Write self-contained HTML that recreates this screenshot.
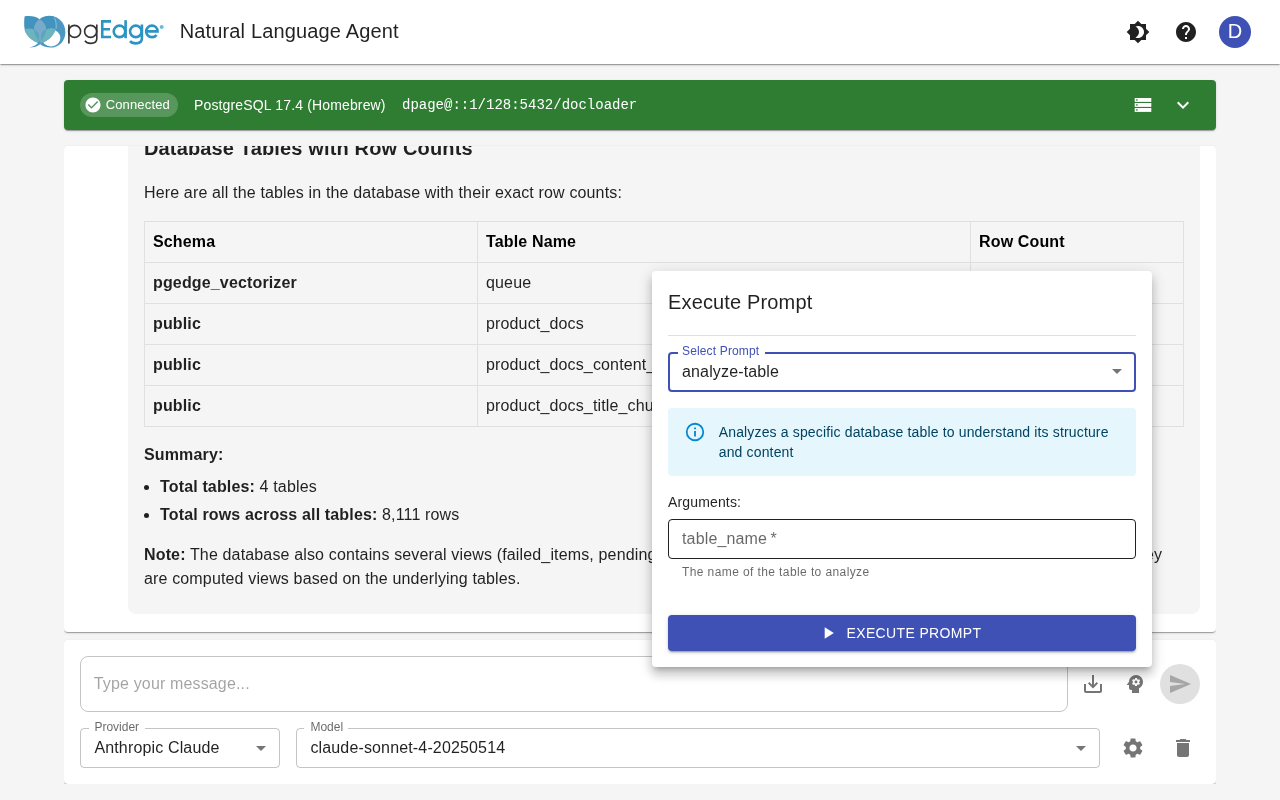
<!DOCTYPE html>
<html><head><meta charset="utf-8">
<style>
*{box-sizing:border-box;margin:0;padding:0}
html,body{width:1280px;height:800px;overflow:hidden}
body>*{will-change:transform}
body{background:#f5f5f5;font-family:"Liberation Sans",sans-serif;color:rgba(0,0,0,0.87);position:relative}
.abs{position:absolute}
.sh1{box-shadow:0px 2px 1px -1px rgba(0,0,0,0.2),0px 1px 1px 0px rgba(0,0,0,0.14),0px 1px 3px 0px rgba(0,0,0,0.12)}
#hdr{left:0;top:0;width:1280px;height:64px;background:#fff}
#title{left:179.7px;top:17px;font-size:20px;letter-spacing:0.15px;line-height:28px;white-space:nowrap}
#banner{left:64px;top:80px;width:1152px;height:50px;background:#2e7d32;border-radius:4px}
#chip{left:16px;top:13px;width:98px;height:24px;border-radius:12px;background:rgba(255,255,255,0.2)}
#chat{left:0;top:8px;width:1152px;height:486px;background:#fff;border-radius:4px;overflow:hidden}
#bubble{left:64px;top:-40px;width:1072px;height:508px;background:#f5f5f5;border-radius:8px}
#input{left:0;top:502px;width:1152px;height:144px;background:#fff;border-radius:4px}
#dlg{left:652px;top:271px;width:500px;height:396px;background:#fff;border-radius:4px;box-shadow:0px 5px 5px -3px rgba(0,0,0,0.2),0px 8px 10px 1px rgba(0,0,0,0.14),0px 3px 14px 2px rgba(0,0,0,0.12)}
.md{font-size:16px;line-height:24px;letter-spacing:0.15px;color:rgba(0,0,0,0.87)}
.md .h3{font-size:20px;font-weight:700;line-height:28px;letter-spacing:0.15px}
.md p{white-space:nowrap}
.md table{border-collapse:collapse;table-layout:fixed;width:1039px}
.md th,.md td{border:1px solid #e0e0e0;padding:8px;text-align:left;line-height:24px;height:41px;white-space:nowrap;overflow:hidden}
.md th{font-weight:700;color:#000}
.md ul{list-style:disc;padding-left:16px}
.md li{margin-bottom:4px}
</style></head><body>
<div id="hdr" class="abs sh1">
  <svg class="abs" style="left:0;top:0" width="180" height="64" viewBox="0 0 180 64">
    <path d="M40 19 C44 15.8 48 15.6 51 15.9 C59.5 16.5 65.5 23.5 65.4 32.4 C65.3 41.2 58.5 47.6 50.5 47.6 C46.5 47.6 43 46.5 40.3 44.3 Z" fill="#4b99c3"/>
    <ellipse cx="51.1" cy="37.9" rx="9.3" ry="8.5" fill="#fff"/>
    <path d="M24.7 16.2 C31 15.3 36 16.3 39.6 19.2 C43 25 43 36 40 43.5 C32 41 25.5 36 24.3 27 C24 22 24.2 18.5 24.7 16.2Z" fill="#4294bf"/>
    <path d="M39.6 19.2 C43 16.5 48 15.6 52 16 C54.2 16.3 55.5 17.5 55.9 20 C56.3 23 56.2 26.5 55.6 29.2 C53.5 36.5 47 41.5 40 43.5 C36.5 36 36.5 25 39.6 19.2Z" fill="#4294bf"/>
    <path d="M54.4 17.6 C55.9 20 56.4 24 56.1 28.6" stroke="#d6e8f2" stroke-width="0.5" fill="none"/>
    <path d="M24.3 29.3 C27.5 28.2 31 28.2 34 29.8 C37.5 32 39.5 37 40 43.5 C33 41.5 26.5 37 24.3 29.3Z" fill="#6db4bd"/>
    <path d="M55.6 28.8 C52.5 27.7 48.5 27.9 45.6 29.8 C42.3 32 40.5 37 40 43.5 C47 41.5 53.5 36.5 55.6 28.8Z" fill="#6db4bd"/>
    <path d="M39.6 19.2 C44 22 46.3 26 46 30 C45.6 35 42 39.5 40 43.5 C38 39.5 34.4 35 34 30 C33.7 26 35.5 22 39.6 19.2Z" fill="#5ba4be"/>
    <path d="M39.6 19.2 C44 22 46.3 26 46 29.6 C43.6 30.3 41.9 32.2 41.2 34.8 L40.9 42.2 L39.2 42.2 L38.9 34.8 C38.2 32.2 36.5 30.3 34 29.6 C33.7 26 35.5 22 39.6 19.2Z" fill="#78aac9"/>
    <path d="M39.6 41 C40.3 41.5 40.5 42.5 40.6 44 C37.5 46.5 34 47.4 29.5 47.4 C34 46.5 37.5 44.5 39.6 41Z" fill="#4b99c3"/>
    <g fill="none" stroke="#333" stroke-width="1.6">
      <circle cx="74.6" cy="31.4" r="6.0"/>
      <path d="M68.9 24.6 V43.4"/>
      <circle cx="90.6" cy="31.4" r="6.0"/>
      <path d="M96.8 24.6 V38.5 C96.8 41.8 94.2 43.4 90.8 43.4 C88.3 43.4 86 42.4 84.9 40.8"/>
    </g>
    <g fill="none" stroke="#2a94c3" stroke-width="2.6">
      <path d="M111 21.35 H102.25 V37.05 H111 M102.25 29.2 H110"/>
      <circle cx="119.5" cy="31.4" r="5.75"/>
      <path d="M125.6 20.2 V38.2"/>
      <circle cx="135.8" cy="31.4" r="5.75"/>
      <path d="M141.9 24.6 V38.3 C141.9 41.9 139.3 43.4 135.9 43.4 C133.4 43.4 131.2 42.6 130 41.2"/>
      <path d="M146.4 31.4 H157.5 C157.5 28 155 25.65 151.9 25.65 C148.7 25.65 146.15 28.2 146.15 31.4 C146.15 34.6 148.7 37.15 151.9 37.15 C153.9 37.15 155.6 36.3 156.6 34.9"/>
    </g>
    <circle cx="161.7" cy="27" r="2" fill="#6cb8d8"/>
  </svg>
  <div id="title" class="abs">Natural Language Agent</div>
  <svg class="abs" style="left:1126px;top:20px" width="24" height="24" viewBox="0 0 24 24"><path fill="#212121" d="M20 8.69V4h-4.69L12 .69 8.69 4H4v4.69L.69 12 4 15.31V20h4.69L12 23.31 15.31 20H20v-4.69L23.31 12 20 8.69zM12 18c-.89 0-1.74-.2-2.5-.55C11.56 16.5 13 14.42 13 12s-1.44-4.5-3.5-5.45C10.26 6.2 11.11 6 12 6c3.31 0 6 2.69 6 6s-2.69 6-6 6z"/></svg>
  <svg class="abs" style="left:1174px;top:20px" width="24" height="24" viewBox="0 0 24 24"><path fill="#212121" d="M12 2C6.48 2 2 6.48 2 12s4.48 10 10 10 10-4.48 10-10S17.52 2 12 2zm1 17h-2v-2h2v2zm2.07-7.75l-.9.92C13.45 12.9 13 13.5 13 15h-2v-.5c0-1.1.45-2.1 1.17-2.83l1.24-1.26c.37-.36.59-.86.59-1.41 0-1.1-.9-2-2-2s-2 .9-2 2H8c0-2.21 1.79-4 4-4s4 1.79 4 4c0 .88-.36 1.68-.93 2.25z"/></svg>
  <div class="abs" style="left:1219px;top:16px;width:32px;height:32px;border-radius:50%;background:#3f51b5;color:#fff;font-size:20px;line-height:31px;text-align:center">D</div>
</div>
<div id="banner" class="abs sh1">
  <div id="chip" class="abs"></div>
  <svg class="abs" style="left:20px;top:16px" width="18" height="18" viewBox="0 0 24 24"><path fill="#fff" d="M12 2C6.48 2 2 6.48 2 12s4.48 10 10 10 10-4.48 10-10S17.52 2 12 2zm-2 15l-5-5 1.41-1.41L10 14.17l7.59-7.59L19 8l-9 9z"/></svg>
  <div class="abs" style="left:41.7px;top:13px;font-size:13px;line-height:24px;letter-spacing:0.15px;color:#fff;white-space:nowrap">Connected</div>
  <div class="abs" style="left:130px;top:13px;font-size:14px;line-height:24px;letter-spacing:0.15px;color:#fff;white-space:nowrap">PostgreSQL 17.4 (Homebrew)</div>
  <div class="abs" style="left:338px;top:13px;font-family:'Liberation Mono',monospace;font-size:14px;line-height:24px;color:#fff;white-space:nowrap">dpage@::1/128:5432/docloader</div>
  <svg class="abs" style="left:1069px;top:15px" width="20" height="20" viewBox="0 0 20 20"><g fill="#fff"><rect x="1.7" y="3" width="16.6" height="3.9"/><rect x="1.7" y="8" width="16.6" height="3.9"/><rect x="1.7" y="13" width="16.6" height="3.9"/></g><g fill="#2e7d32"><rect x="3.2" y="4.2" width="1.4" height="1.5"/><rect x="3.2" y="9.2" width="1.4" height="1.5"/><rect x="3.2" y="14.2" width="1.4" height="1.5"/></g></svg>
  <svg class="abs" style="left:1107px;top:13px" width="24" height="24" viewBox="0 0 24 24"><path fill="#fff" d="M16.59 8.59L12 13.17 7.41 8.59 6 10l6 6 6-6z"/></svg>
</div>
<div id="clip" class="abs" style="left:64px;top:138px;width:1152px;height:646px;overflow:hidden">
<div id="chat" class="abs sh1">
  <div id="bubble" class="abs"></div>
  <div class="abs md" style="left:80px;top:-12px;width:1040px">
    <div class="h3" style="height:28px">Database Tables with Row Counts</div>
    <p style="position:absolute;top:47px;left:0">Here are all the tables in the database with their exact row counts:</p>
    <table style="position:absolute;top:87px;left:0">
      <colgroup><col style="width:333px"><col style="width:493px"><col style="width:213px"></colgroup>
      <tr><th>Schema</th><th>Table Name</th><th>Row Count</th></tr>
      <tr><td><b>pgedge_vectorizer</b></td><td>queue</td><td>0</td></tr>
      <tr><td><b>public</b></td><td>product_docs</td><td>1</td></tr>
      <tr><td><b>public</b></td><td>product_docs_content_chunks</td><td>4,055</td></tr>
      <tr><td><b>public</b></td><td>product_docs_title_chunks</td><td>4,055</td></tr>
    </table>
    <p style="position:absolute;top:309px;left:0"><b>Summary:</b></p>
    <ul style="position:absolute;top:341px;left:0">
      <li><b>Total tables:</b> 4 tables</li>
      <li><b>Total rows across all tables:</b> 8,111 rows</li>
    </ul>
    <p style="position:absolute;top:409px;left:0;width:1040px;white-space:normal"><b>Note:</b> The database also contains several views (failed_items, pending_items, vectorizer_status, chunk_stats) which are not counted<span style="margin-left:1.75px"></span> as they are computed views based on the underlying tables.</p>
  </div>
</div>
<div id="input" class="abs sh1">
  <div class="abs" style="left:16px;top:16px;width:988px;height:56px;border:1px solid rgba(0,0,0,0.23);border-radius:8px"></div>
  <div class="abs" style="left:29.8px;top:32.4px;font-size:16px;line-height:24px;letter-spacing:0.15px;color:rgba(0,0,0,0.365);white-space:nowrap">Type your message...</div>
  <svg class="abs" style="left:1017px;top:32px" width="24" height="24" viewBox="0 0 24 24"><path fill="rgba(0,0,0,0.54)" d="M19 12v7H5v-7H3v7c0 1.1.9 2 2 2h14c1.1 0 2-.9 2-2v-7h-2zm-6 .67l2.59-2.58L17 11.5l-5 5-5-5 1.41-1.41L11 12.67V3h2z"/></svg>
  <svg class="abs" style="left:1059px;top:32px" width="24" height="24" viewBox="0 0 24 24"><path fill="rgba(0,0,0,0.54)" fill-rule="evenodd" d="M13 3C9.23 3 6.19 5.95 6.02 9.66L4.1 12.22c-.25.33-.01.78.4.78H6v3c0 1.1.9 2 2 2h1v3h7v-4.68c2.36-1.12 4-3.53 4-6.32 0-3.87-3.13-7-7-7zm3 7c0 .13-.01.26-.02.39l.83.66c.08.06.1.16.05.25l-.8 1.39c-.05.09-.16.12-.24.09l-.99-.4c-.21.16-.43.29-.67.39L14 13.83c-.01.1-.1.17-.2.17h-1.6c-.1 0-.18-.07-.2-.17l-.15-1.06c-.25-.1-.47-.23-.68-.39l-.99.4c-.09.03-.2 0-.25-.09l-.8-1.39c-.05-.08-.03-.19.05-.25l.84-.66c-.01-.13-.02-.26-.02-.39s.02-.27.04-.39l-.85-.66c-.08-.06-.1-.16-.05-.26l.8-1.38c.05-.09.15-.12.24-.09l1 .4c.2-.15.43-.29.67-.39L12.17 6.2c.01-.1.1-.17.2-.17h1.6c.1 0 .18.07.2.17l.15 1.06c.24.1.46.23.67.39l1-.4c.09-.03.2 0 .24.09l.8 1.38c.05.09.03.2-.05.26l-.85.66c.03.12.04.25.04.39zm-3-1.43c-.79 0-1.43.64-1.43 1.43s.64 1.43 1.43 1.43 1.43-.64 1.43-1.43-.64-1.43-1.43-1.43z"/></svg>
  <div class="abs" style="left:1096px;top:24px;width:40px;height:40px;border-radius:50%;background:rgba(0,0,0,0.12)"></div>
  <svg class="abs" style="left:1104px;top:32px" width="24" height="24" viewBox="0 0 24 24"><path fill="rgba(0,0,0,0.26)" d="M2.01 21L23 12 2.01 3 2 10l15 2-15 2z"/></svg>
  <div class="abs" style="left:16px;top:88px;width:200px;height:40px;border:1px solid rgba(0,0,0,0.23);border-radius:4px"></div>
  <div class="abs" style="left:25px;top:84px;width:56.2px;height:6px;background:#fff"></div>
  <div class="abs" style="left:30.4px;top:78.7px;font-size:12px;line-height:16px;color:rgba(0,0,0,0.6);white-space:nowrap">Provider</div>
  <div class="abs" style="left:30.4px;top:96.3px;font-size:16px;line-height:24px;letter-spacing:0.15px;white-space:nowrap">Anthropic Claude</div>
  <svg class="abs" style="left:185px;top:96px" width="24" height="24" viewBox="0 0 24 24"><path fill="rgba(0,0,0,0.54)" d="M7 10l5 5 5-5z"/></svg>
  <div class="abs" style="left:232px;top:88px;width:804px;height:40px;border:1px solid rgba(0,0,0,0.23);border-radius:4px"></div>
  <div class="abs" style="left:239.9px;top:84px;width:44.4px;height:6px;background:#fff"></div>
  <div class="abs" style="left:246.4px;top:78.7px;font-size:12px;line-height:16px;color:rgba(0,0,0,0.6);white-space:nowrap">Model</div>
  <div class="abs" style="left:246.4px;top:96.3px;font-size:16px;line-height:24px;letter-spacing:0.15px;white-space:nowrap">claude-sonnet-4-20250514</div>
  <svg class="abs" style="left:1005px;top:96px" width="24" height="24" viewBox="0 0 24 24"><path fill="rgba(0,0,0,0.54)" d="M7 10l5 5 5-5z"/></svg>
  <svg class="abs" style="left:1057px;top:96px" width="24" height="24" viewBox="0 0 24 24"><path fill="rgba(0,0,0,0.54)" d="M19.14 12.94c.04-.3.06-.61.06-.94 0-.32-.02-.64-.07-.94l2.03-1.58c.18-.14.23-.41.12-.61l-1.92-3.32c-.12-.22-.37-.29-.59-.22l-2.39.96c-.5-.38-1.03-.7-1.62-.94l-.36-2.54c-.04-.24-.24-.41-.48-.41h-3.84c-.24 0-.43.17-.47.41l-.36 2.54c-.59.24-1.13.57-1.62.94l-2.39-.96c-.22-.08-.47 0-.59.22L2.74 8.87c-.12.21-.08.47.12.61l2.03 1.58c-.05.3-.09.63-.09.94s.02.64.07.94l-2.03 1.58c-.18.14-.23.41-.12.61l1.92 3.32c.12.22.37.29.59.22l2.39-.96c.5.38 1.03.7 1.62.94l.36 2.54c.05.24.24.41.48.41h3.84c.24 0 .44-.17.47-.41l.36-2.54c.59-.24 1.13-.56 1.62-.94l2.39.96c.22.08.47 0 .59-.22l1.92-3.32c.12-.22.07-.47-.12-.61l-2.01-1.58zM12 15.6c-1.98 0-3.6-1.62-3.6-3.6s1.62-3.6 3.6-3.6 3.6 1.62 3.6 3.6-1.62 3.6-3.6 3.6z"/></svg>
  <svg class="abs" style="left:1107px;top:96px" width="24" height="24" viewBox="0 0 24 24"><path fill="rgba(0,0,0,0.54)" d="M6 19c0 1.1.9 2 2 2h8c1.1 0 2-.9 2-2V7H6v12zM19 4h-3.5l-1-1h-5l-1 1H5v2h14V4z"/></svg>
</div>
</div>
<div id="dlg" class="abs">
  <div class="abs" style="left:16px;top:15px;font-size:20px;line-height:32px;letter-spacing:0.15px;white-space:nowrap">Execute Prompt</div>
  <div class="abs" style="left:16px;top:64px;width:468px;height:1px;background:rgba(0,0,0,0.12)"></div>
  <div class="abs" style="left:16px;top:81px;width:468px;height:40px;border:2px solid #3f51b5;border-radius:4px"></div>
  <div class="abs" style="left:25.5px;top:78px;width:87.3px;height:6px;background:#fff"></div>
  <div class="abs" style="left:30px;top:72px;font-size:12px;line-height:16px;letter-spacing:0.15px;color:#3f51b5;white-space:nowrap">Select Prompt</div>
  <div class="abs" style="left:30px;top:88.5px;font-size:16px;line-height:24px;letter-spacing:0.15px;white-space:nowrap">analyze-table</div>
  <svg class="abs" style="left:453px;top:88px" width="24" height="24" viewBox="0 0 24 24"><path fill="rgba(0,0,0,0.54)" d="M7 10l5 5 5-5z"/></svg>
  <div class="abs" style="left:16px;top:137px;width:468px;height:68px;background:#e5f6fd;border-radius:4px"></div>
  <svg class="abs" style="left:32px;top:150px" width="22" height="22" viewBox="0 0 24 24"><path fill="#0288d1" d="M11,9H13V7H11M12,20C7.59,20 4,16.41 4,12C4,7.59 7.59,4 12,4C16.41,4 20,7.59 20,12C20,16.41 16.41,20 12,20M12,2A10,10 0 0,0 2,12A10,10 0 0,0 12,22A10,10 0 0,0 22,12A10,10 0 0,0 12,2M11,17H13V11H11V17Z"/></svg>
  <div class="abs" style="left:66.75px;top:151px;width:410px;font-size:14px;line-height:20px;letter-spacing:0.15px;color:#014361">Analyzes a specific database table to understand its structure<br>and content</div>
  <div class="abs" style="left:16px;top:221px;font-size:14px;line-height:20px;letter-spacing:0.15px;white-space:nowrap">Arguments:</div>
  <div class="abs" style="left:16px;top:248px;width:468px;height:40px;border:1px solid rgba(0,0,0,0.87);border-radius:4px"></div>
  <div class="abs" style="left:30px;top:255.5px;font-size:16px;line-height:24px;letter-spacing:0.15px;color:rgba(0,0,0,0.6);white-space:nowrap">table_name&thinsp;*</div>
  <div class="abs" style="left:30px;top:291px;font-size:12px;line-height:20px;letter-spacing:0.4px;color:rgba(0,0,0,0.6);white-space:nowrap">The name of the table to analyze</div>
  <div class="abs" style="left:16px;top:344px;width:468px;height:36px;background:#3f51b5;border-radius:4px;box-shadow:0px 3px 1px -2px rgba(0,0,0,0.2),0px 2px 2px 0px rgba(0,0,0,0.14),0px 1px 5px 0px rgba(0,0,0,0.12)"></div>
  <svg class="abs" style="left:165.6px;top:352px" width="20" height="20" viewBox="0 0 24 24"><path fill="#fff" d="M8 5v14l11-7z"/></svg>
  <div class="abs" style="left:194.5px;top:352px;font-size:14px;line-height:20px;letter-spacing:0.36px;color:#fff;white-space:nowrap">EXECUTE PROMPT</div>
</div>
</body></html>
